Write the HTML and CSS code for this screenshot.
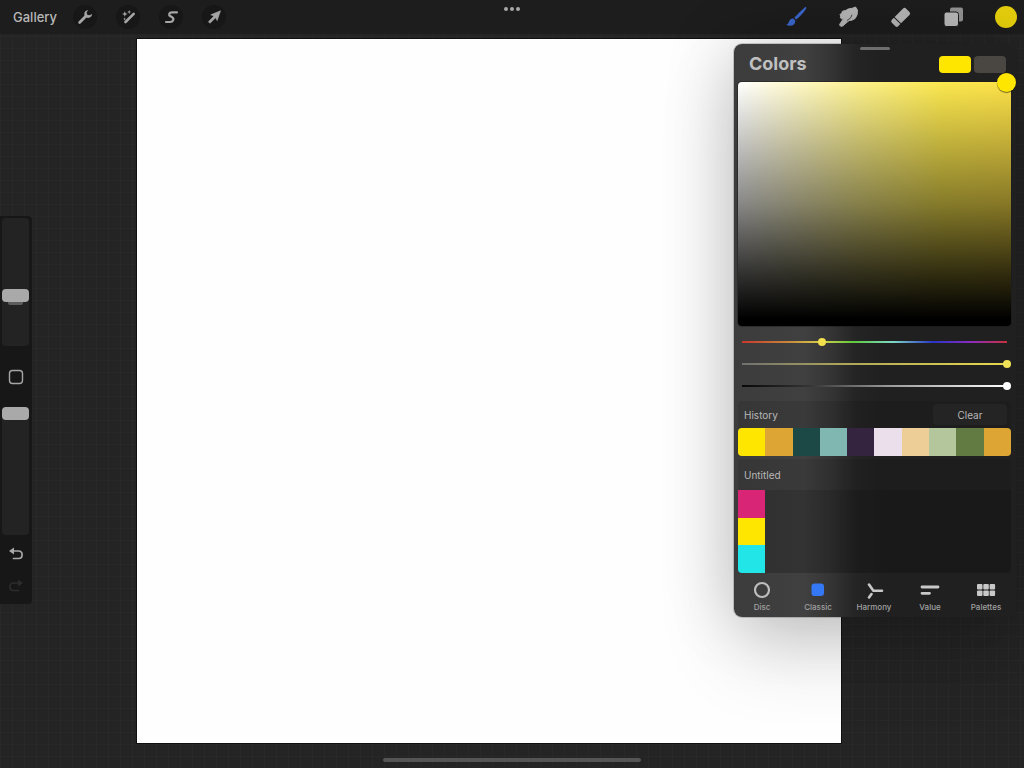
FILE: index.html
```html
<!DOCTYPE html>
<html lang="en">
<head>
<meta charset="utf-8">
<meta name="viewport" content="width=device-width, initial-scale=1">
<title>Canvas</title>
<link rel="stylesheet" href="styles.css">
</head>
<body>
<header class="topbar">
  <nav class="actions" aria-label="Canvas tools">
    <button class="gallery">Gallery</button>
    <button class="round" aria-label="Actions">
      <svg width="16" height="16" viewBox="0 0 16 16"><path d="M2.600 13.400 9 7" stroke="#a6a6a6" stroke-width="2.800" stroke-linecap="round"/><path d="M11.200 1.200C9 1.200 7.200 2.800 7.300 5.200c.1 2 1.600 3.600 3.700 3.700 2.200.1 4.100-1.500 4.100-3.900l-2.500 1.300-2.400-.6-.6-2.200z" fill="#a6a6a6"/></svg>
    </button>
    <button class="round" aria-label="Adjustments">
      <svg width="16" height="16" viewBox="0 0 16 16"><path d="M5.500 13 13.700 4.800" stroke="#a6a6a6" stroke-width="2.600" stroke-linecap="round"/><path d="M4.800 2.200l.8 2 2 .8-2 .8-.8 2-.8-2-2-.8 2-.8zM9.200 1l.6 1.400 1.400.6-1.400.6-.6 1.400-.6-1.400L7.200 3l1.400-.6zM4.600 8.600l.4 1 1 .4-1 .4-.4 1-.4-1-1-.4 1-.4z" fill="#a6a6a6"/></svg>
    </button>
    <button class="round" aria-label="Selection">
      <svg width="16" height="16" viewBox="0 0 16 16"><path d="M14 3.300H9C5.800 3.300 5.400 6 7.400 7.200l1.900 1.100c2 1.300 1 4.700-2 4.700H3" fill="none" stroke="#a6a6a6" stroke-width="2.200" stroke-linecap="round"/></svg>
    </button>
    <button class="round" aria-label="Transform">
      <svg width="16" height="16" viewBox="0 0 16 16"><path d="M14.500 1.800 11.200 11.600 9.600 8.700 4 14.300 2.400 12.700 8 7.100 4.800 5.800z" fill="#a6a6a6" stroke="#a6a6a6" stroke-width=".6" stroke-linejoin="round"/></svg>
    </button>
  </nav>
  <button class="dots" aria-label="Multitasking"><i></i><i></i><i></i></button>
  <nav class="tools" aria-label="Painting tools">
    <button class="tool" aria-label="Brush">
      <svg width="24" height="24" viewBox="0 0 24 24"><path d="M22 2.200c.6.500.3 1.100-.1 1.700-2.700 4-6 7.600-9.700 10.700l-1.900-1.900C13.500 9 17 5.500 20.700 2.400c.5-.4.9-.6 1.300-.2z" fill="#3a66cc"/><path d="M9.400 13.600l1.900 1.900c.3 2.600-1.200 4.600-3.700 5.100-1.800.4-3.900.2-5.500-.8 1.300-.3 1.900-1.100 2.500-2.400.9-2.300 2.200-3.900 4.800-3.800z" fill="#3a66cc"/></svg>
    </button>
    <button class="tool" aria-label="Smudge">
      <svg width="24" height="24" viewBox="0 0 24 24"><path d="M8.800 5.400 11.200 4l4.300-.8 3-1.200 2 3.200-.4 4.600-2 3.700-3.300 1.700-2.600.3-2 1.600-4.400 3.800c-1.500 1.200-3.800-.1-2.900-1.900l3.600-5.400-1.900.2-1.300-1.100.4-1.500-.6-1.600 1.900-2 .3-1.300z" fill="#b4b4b4" stroke="#b4b4b4" stroke-width="1" stroke-linejoin="round"/><path d="m10.300 15.300 3.500-2.600 1-2.600" fill="none" stroke="#3a3a3a" stroke-width=".9" stroke-linecap="round"/></svg>
    </button>
    <button class="tool" aria-label="Eraser">
      <svg width="24" height="24" viewBox="0 0 24 24"><g transform="rotate(-45 12 12)" fill="#b4b4b4"><path d="M7.500 7.500h12q2 0 2 2v5q0 2-2 2h-12z"/><path d="M3.500 7.500h3v9h-3q-2 0-2-2v-5q0-2 2-2z"/></g></svg>
    </button>
    <button class="tool" aria-label="Layers">
      <svg width="24" height="24" viewBox="0 0 24 24"><rect x="8" y="2.500" width="13" height="14" rx="2" fill="#929292"/><rect x="2" y="7" width="14.500" height="14.500" rx="2.500" fill="#b8b8b8" stroke="#1d1d1d"/></svg>
    </button>
    <button class="tool" aria-label="Current color"><span class="current"></span></button>
  </nav>
</header>

<main class="workspace">
  <aside class="sidebar">
    <div class="size">
      <input class="vertical" type="range" min="0" max="100" value="38" aria-label="Brush size">
      <span class="notch"></span>
    </div>
    <button class="side-button modify" aria-label="Modify"><svg width="16" height="16" viewBox="0 0 16 16"><rect x="1.500" y="1.500" width="13" height="13" rx="3" fill="none" stroke="#a5a5a5" stroke-width="1.400"/></svg></button>
    <input class="vertical" type="range" min="0" max="100" value="100" aria-label="Brush opacity">
    <div class="history-buttons">
      <button class="side-button" aria-label="Undo"><svg width="16" height="16" viewBox="0 0 16 16"><path d="M4 5h6.500c4.800 0 4.800 7.500 0 7.500H5.500" fill="none" stroke="#a8a8a8" stroke-width="1.700" stroke-linecap="round"/><path d="M1 5 6 1.600v6.800z" fill="#a8a8a8"/></svg></button>
      <button class="side-button" aria-label="Redo" disabled><svg width="16" height="16" viewBox="0 0 16 16"><path d="M12 5H5.500C.7 5 .7 12.500 5.500 12.500h5" fill="none" stroke="#2c2c2c" stroke-width="1.700" stroke-linecap="round"/><path d="M15 5 10 1.600v6.800z" fill="#2c2c2c"/></svg></button>
    </div>
  </aside>
  <div class="stage"><div class="canvas"></div></div>

  <section class="panel" aria-labelledby="colors-title">
    <div class="grabber"></div>
    <div class="panel-head">
      <h1 id="colors-title">Colors</h1>
      <div class="pair">
        <button class="chip primary" aria-label="Primary color"></button>
        <button class="chip secondary" aria-label="Secondary color"></button>
      </div>
    </div>
    <div class="picker"><button class="reticle" aria-label="Saturation and brightness"></button></div>
    <div class="sliders">
      <input class="slider hue" type="range" min="0" max="100" value="30" aria-label="Hue">
      <input class="slider saturation" type="range" min="0" max="100" value="100" aria-label="Saturation">
      <input class="slider brightness" type="range" min="0" max="100" value="100" aria-label="Brightness">
    </div>
    <div class="section-head">
      <h2>History</h2>
      <button class="clear">Clear</button>
    </div>
    <div class="swatches">
      <button class="yellow" aria-label="Yellow"></button>
      <button class="ochre" aria-label="Ochre"></button>
      <button class="pine" aria-label="Pine"></button>
      <button class="aqua" aria-label="Aqua"></button>
      <button class="plum" aria-label="Plum"></button>
      <button class="lilac" aria-label="Lilac"></button>
      <button class="sand" aria-label="Sand"></button>
      <button class="sage" aria-label="Sage"></button>
      <button class="moss" aria-label="Moss"></button>
      <button class="ochre" aria-label="Ochre"></button>
    </div>
    <div class="section-head palette-head"><h2>Untitled</h2></div>
    <div class="palette">
      <button class="pink" aria-label="Pink"></button>
      <button class="yellow" aria-label="Yellow"></button>
      <button class="cyan" aria-label="Cyan"></button>
    </div>
    <nav class="tabs" aria-label="Color modes">
      <button><svg width="20" height="18" viewBox="0 0 20 18"><circle cx="10" cy="9" r="7" fill="none" stroke="#bdbdbd" stroke-width="2.200"/></svg>Disc</button>
      <button aria-current="true"><svg width="20" height="18" viewBox="0 0 20 18"><rect x="3.500" y="2.500" width="12.500" height="12.500" rx="3" fill="#3478f6"/></svg>Classic</button>
      <button><svg width="20" height="18" viewBox="0 0 20 18"><path d="M5 3.500 9.400 9.700H18M7.500 13 5 16.500" fill="none" stroke="#c8c8c8" stroke-width="2.600" stroke-linecap="round" stroke-linejoin="round"/></svg>Harmony</button>
      <button><svg width="20" height="18" viewBox="0 0 20 18"><path d="M2 6h16M2 12.300h7.500" stroke="#c8c8c8" stroke-width="2.800" stroke-linecap="round"/></svg>Value</button>
      <button><svg width="20" height="18" viewBox="0 0 20 18"><g fill="#c8c8c8"><rect x="1" y="3" width="5.500" height="5.500" rx="1"/><rect x="7.300" y="3" width="5.500" height="5.500" rx="1"/><rect x="13.600" y="3" width="5.500" height="5.500" rx="1"/><rect x="1" y="9.500" width="5.500" height="5.500" rx="1"/><rect x="7.300" y="9.500" width="5.500" height="5.500" rx="1"/><rect x="13.600" y="9.500" width="5.500" height="5.500" rx="1"/></g></svg>Palettes</button>
    </nav>
  </section>
</main>
<footer class="home"><span></span></footer>
</body>
</html>
```

FILE: styles.css
```css
* { box-sizing: border-box; }

body {
  margin: 0;
  height: 100vh;
  display: flex;
  flex-direction: column;
  overflow: hidden;
  font-family: Inter, "Liberation Sans", sans-serif;
  color: #b8b8b8;
  background-color: #242424;
  background-image:
    linear-gradient(90deg, #282828 1px, transparent 1px),
    linear-gradient(#282828 1px, transparent 1px);
  background-size: 12px 12px;
}

button {
  margin: 0;
  padding: 0;
  border: 0;
  background: none;
  color: inherit;
  font: inherit;
}

h1, h2 { margin: 0; }
svg { display: block; }

/* Top bar */
.topbar {
  height: 34px;
  flex: none;
  display: grid;
  grid-template-columns: 1fr auto 1fr;
  background: #1d1d1d;
}

.actions {
  display: flex;
  align-items: center;
  gap: 19px;
  padding-left: 13px;
}

.gallery {
  width: 41px;
  font-size: 13px;
  font-weight: 500;
  white-space: nowrap;
}

.round {
  width: 24px;
  height: 24px;
  border-radius: 50%;
  display: grid;
  place-items: center;
  background: #171717;
}

.dots {
  display: flex;
  gap: 2px;
  align-self: start;
  padding: 7px 0;
}

.dots i {
  width: 4px;
  height: 4px;
  border-radius: 50%;
  background: #a8a8a8;
}

.tools {
  width: 234px;
  justify-self: end;
  display: flex;
  align-items: center;
  justify-content: space-between;
  margin-right: 6px;
}

.tool {
  width: 24px;
  height: 24px;
  display: grid;
  place-items: center;
}

.current {
  width: 22px;
  height: 22px;
  border-radius: 50%;
  background: #e6cf0c;
}

/* Work area */
.workspace {
  position: relative;
  flex: 1;
  min-height: 0;
  display: flex;
}

.sidebar {
  width: 32px;
  flex: none;
  align-self: flex-start;
  margin-top: 182px;
  padding: 2px 3px 2px 2px;
  border-radius: 0 4px 4px 0;
  background: #171717;
}

.size { position: relative; }

.vertical {
  display: block;
  appearance: none;
  writing-mode: vertical-lr;
  direction: rtl;
  width: 27px;
  height: 128px;
  margin: 0;
  border-radius: 4px;
  background: #232323;
}

.vertical::-webkit-slider-thumb {
  appearance: none;
  width: 27px;
  height: 13px;
  border-radius: 4px;
  background: #a9a9a9;
}

.notch {
  position: absolute;
  top: 84px;
  left: 6px;
  width: 15px;
  height: 3px;
  border-radius: 0 0 2px 2px;
  background: #5c5c5c;
}

.side-button {
  width: 27px;
  height: 32px;
  display: grid;
  place-items: center;
}

.modify { height: 61px; }
.history-buttons { padding-top: 3px; }

.stage {
  flex: 1;
  padding: 5px 0 0 105px;
}

.canvas {
  height: 100%;
  aspect-ratio: 1;
  background: #fefefe;
  box-shadow: 0 0 0 1px #101010;
}

.home {
  height: 25px;
  flex: none;
  display: grid;
  place-items: center;
  padding-top: 9px;
}

.home span {
  width: 258px;
  height: 4px;
  border-radius: 2px;
  background: #555;
}

/* Colors panel floating over the canvas */
.panel {
  position: absolute;
  top: 10px;
  right: 8px;
  width: 282px;
  overflow: hidden;
  border-radius: 8px;
  background: linear-gradient(90deg, #3c3c3c 0, #404040 70px, #353535 96px, #242424 122px, #202020 150px);
  box-shadow:
    0 0 0 1px #1c1c1c33,
    0 0 70px #00000030,
    0 36px 80px #00000024;
}

.grabber {
  width: 30px;
  height: 3px;
  margin: 3px auto 0;
  border-radius: 2px;
  background: #6e6e6e;
}

.panel-head {
  height: 28px;
  margin-bottom: 4px;
  padding: 0 10px 0 15px;
  display: flex;
  align-items: center;
  justify-content: space-between;
}

.panel-head h1 {
  font-size: 18px;
  line-height: 26px;
  font-weight: 700;
  color: #c0c0c0;
}

.pair {
  display: flex;
  gap: 3px;
}

.chip {
  width: 32px;
  height: 17px;
  border-radius: 4px;
}

.primary { background: #ffe600; }
.secondary { background: #4a4743; }

.picker {
  position: relative;
  height: 244px;
  margin: 0 5px 0 4px;
  border-radius: 4px;
  background:
    linear-gradient(#0000 0, #00000078 50%, #000000cc 78%, #000 97%),
    linear-gradient(90deg, #fff, #fcf08a 45%, #fbe74e 75%, #fde148);
  box-shadow: 0 0 0 1px #1a1a1a80;
}

.reticle {
  position: absolute;
  top: -9px;
  right: -5px;
  width: 19px;
  height: 19px;
  border-radius: 50%;
  background: #ffe600;
  box-shadow: 0 1px 1px #0008;
}

.sliders {
  padding: 5px 5px 4px 4px;
  display: grid;
}

.slider {
  appearance: none;
  width: 100%;
  height: 22px;
  margin: 0;
  background: none;
}

.slider::-webkit-slider-runnable-track {
  height: 2px;
  background: var(--ramp) center / calc(100% - 8px) 100% no-repeat;
}

.slider::-webkit-slider-thumb {
  appearance: none;
  width: 8px;
  height: 8px;
  margin-top: -3px;
  border-radius: 50%;
  background: var(--knob);
}

.hue {
  --ramp: linear-gradient(90deg, #c8372d, #c98a3c 18%, #d8d04a 30%, #5ec83c 42%, #7fd8c8 57%, #2834c8 72%, #8a2bc0 86%, #c83040);
  --knob: #f2e04c;
}

.saturation {
  --ramp: linear-gradient(90deg, #707070, #aaa35a 35%, #e8d84e);
  --knob: #f0e256;
}

.brightness {
  --ramp: linear-gradient(90deg, #080808, #333 25%, #999 55%, #fff);
  --knob: #fff;
}

.section-head {
  height: 27px;
  margin: 0 5px 0 4px;
  padding: 0 4px 0 6px;
  display: flex;
  align-items: center;
  justify-content: space-between;
  border-radius: 4px 4px 0 0;
  background: #00000018;
}

.section-head h2 {
  font-size: 10px;
  font-weight: 400;
}

.clear {
  width: 74px;
  height: 21px;
  border-radius: 4px;
  font-size: 10px;
  background: #ffffff08;
}

.swatches {
  height: 28px;
  margin: 0 5px 3px 4px;
  display: flex;
  overflow: hidden;
  border-radius: 4px;
}

.swatches button { flex: 1; }

.palette-head { height: 31px; }

.palette {
  height: 83px;
  margin: 0 5px 0 4px;
  display: grid;
  grid-template-columns: repeat(10, 1fr);
  grid-template-rows: repeat(3, 1fr);
  grid-auto-flow: column;
  overflow: hidden;
  border-radius: 0 0 4px 4px;
  background: #00000034;
}

.yellow { background: #ffe600; }
.ochre { background: #dda534; }
.pine { background: #1c4845; }
.aqua { background: #80b7b1; }
.plum { background: #352440; }
.lilac { background: #ebdfec; }
.sand { background: #ecce96; }
.sage { background: #b4c69b; }
.moss { background: #617b43; }
.pink { background: #d92576; }
.cyan { background: #22e5e8; }

.tabs {
  height: 44px;
  padding-right: 2px;
  display: grid;
  grid-template-columns: repeat(5, 1fr);
}

.tabs button {
  display: flex;
  flex-direction: column;
  align-items: center;
  padding-top: 8px;
  gap: 3px;
  font-size: 8px;
  line-height: 10px;
  font-weight: 500;
  color: #a0a0a0;
}
```
